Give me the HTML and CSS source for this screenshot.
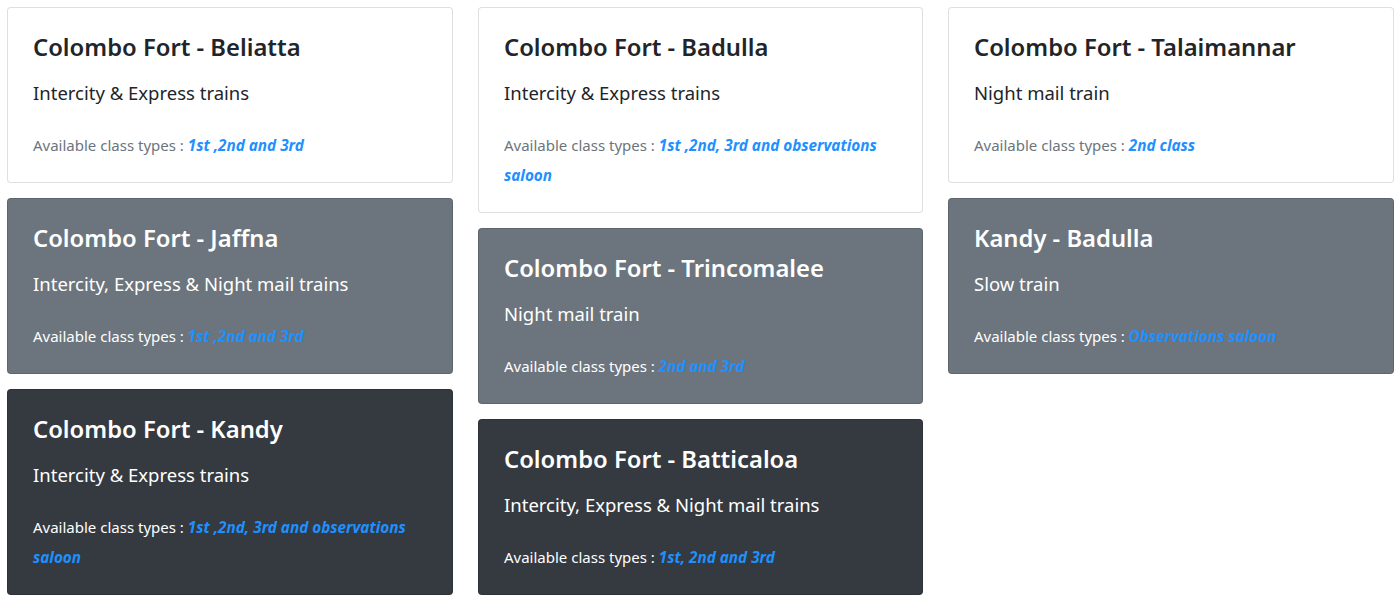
FILE: index.html
```html
<!DOCTYPE html>
<html lang="en">
<head>
<meta charset="utf-8">
<title>Train routes</title>
<link rel="stylesheet" href="styles.css">
</head>
<body>
<main class="columns">
  <div class="column">
    <section class="card card-light">
      <h3 class="card-title">Colombo Fort - Beliatta</h3>
      <p class="card-sub">Intercity &amp; Express trains</p>
      <p class="card-info">Available class types : <b class="cls">1st ,2nd and 3rd</b></p>
    </section>
    <section class="card card-gray">
      <h3 class="card-title">Colombo Fort - Jaffna</h3>
      <p class="card-sub">Intercity, Express &amp; Night mail trains</p>
      <p class="card-info">Available class types : <b class="cls">1st ,2nd and 3rd</b></p>
    </section>
    <section class="card card-dark">
      <h3 class="card-title">Colombo Fort - Kandy</h3>
      <p class="card-sub">Intercity &amp; Express trains</p>
      <p class="card-info">Available class types : <b class="cls">1st ,2nd, 3rd and observations saloon</b></p>
    </section>
  </div>
  <div class="column">
    <section class="card card-light">
      <h3 class="card-title">Colombo Fort - Badulla</h3>
      <p class="card-sub">Intercity &amp; Express trains</p>
      <p class="card-info">Available class types : <b class="cls">1st ,2nd, 3rd and observations saloon</b></p>
    </section>
    <section class="card card-gray">
      <h3 class="card-title">Colombo Fort - Trincomalee</h3>
      <p class="card-sub">Night mail train</p>
      <p class="card-info">Available class types : <b class="cls">2nd and 3rd</b></p>
    </section>
    <section class="card card-dark">
      <h3 class="card-title">Colombo Fort - Batticaloa</h3>
      <p class="card-sub">Intercity, Express &amp; Night mail trains</p>
      <p class="card-info">Available class types : <b class="cls">1st, 2nd and 3rd</b></p>
    </section>
  </div>
  <div class="column">
    <section class="card card-light">
      <h3 class="card-title">Colombo Fort - Talaimannar</h3>
      <p class="card-sub">Night mail train</p>
      <p class="card-info">Available class types : <b class="cls">2nd class</b></p>
    </section>
    <section class="card card-gray">
      <h3 class="card-title">Kandy - Badulla</h3>
      <p class="card-sub">Slow train</p>
      <p class="card-info">Available class types : <b class="cls">Observations saloon</b></p>
    </section>
  </div>
</main>
</body>
</html>
```
FILE: styles.css
```css
* { box-sizing: border-box; }
html, body { margin: 0; padding: 0; background: #fff; }
body {
  font-family: "Noto Sans", "Open Sans", sans-serif;
  color: #212529;
}
.columns {
  display: grid;
  grid-template-columns: 446px 445px 446px;
  column-gap: 25px;
  padding: 7px 6px 0 7px;
  align-items: start;
}
.column {
  display: flex;
  flex-direction: column;
  gap: 15px;
}
.card {
  border: 1px solid rgba(0, 0, 0, 0.125);
  border-radius: 4px;
  padding: 22px 25px 22px 25px;
}
.card-light { background: #fff; color: #212529; }
.card-gray { background: #6c757d; color: #fff; }
.card-dark { background: #343a40; color: #fff; }
.card-title {
  margin: 0;
  font-size: 23.8px;
  font-weight: 600;
  line-height: 34px;
}
.card-sub {
  margin: 15px 0 0;
  font-size: 18.5px;
  font-weight: 400;
  line-height: 28px;
}
.card-info {
  margin: 23px 0 0;
  font-size: 15px;
  line-height: 30px;
}
.card-light .card-info { color: #6c757d; }
.cls {
  color: #1e90ff;
  font-weight: 700;
  font-style: italic;
  font-size: 15.3px;
}
```
